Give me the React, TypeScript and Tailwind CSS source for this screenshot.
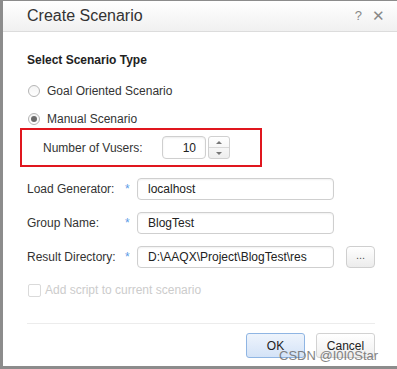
const Radio = ({ checked }: { checked?: boolean }) => (
  <span className="flex h-[12px] w-[12px] items-center justify-center rounded-full border border-[#b5b5b5] bg-gradient-to-b from-[#f4f4f4] to-white">
    {checked && <span className="h-[6px] w-[6px] rounded-full bg-[#6b6b6b]" />}
  </span>
);

const Field = ({ label, value }: { label: string; value: string }) => (
  <div className="flex h-[22px] items-center">
    <span className="w-[98px] text-[12px] leading-[16px] text-[#333]">{label}</span>
    <span className="w-[12px] text-[12px] leading-[16px] text-[#5b9be6]">*</span>
    <div className="flex h-[22px] w-[197px] items-center rounded-[4px] border border-[#cfcfcf] pl-[10px] text-[12px] leading-[16px] text-[#222] shadow-[inset_0_1px_2px_rgba(0,0,0,0.06)]">
      {value}
    </div>
  </div>
);

const App = () => {
  return (
    <div
      className="relative h-[369px] w-[397px] overflow-hidden bg-white leading-[16px]"
      style={{ fontFamily: '"Liberation Sans", Arial, sans-serif' }}
    >
      <div className="flex h-[369px] flex-col border-l-[3px] border-t border-b-[3px] border-[#8c8c8c]">
        <div className="flex h-[31px] shrink-0 items-center justify-between border-b border-[#dcdcdc] bg-gradient-to-b from-white to-[#f0f0f0] pl-[24px] pr-[12px]">
          <span className="text-[16px] leading-[20px] text-[#333]">Create Scenario</span>
          <div className="flex items-center gap-[10px] text-[13px] text-[#888]">
            <span>?</span>
            <span className="text-[15px]">✕</span>
          </div>
        </div>

        <div className="flex flex-col pl-[24px] pr-[19px]">
          <div className="mt-[20px] h-[16px] text-[12px] font-bold text-[#222]">Select Scenario Type</div>

          <div className="mt-[15px] flex h-[16px] items-center gap-[7px] pl-[1px] text-[12px] text-[#333]">
            <Radio />
            <span>Goal Oriented Scenario</span>
          </div>
          <div className="mt-[12px] flex h-[16px] items-center gap-[7px] pl-[1px] text-[12px] text-[#333]">
            <Radio checked />
            <span>Manual Scenario</span>
          </div>

          <div className="-ml-[7px] mt-[1px] flex h-[39px] w-[242px] items-center border-2 border-[#e0161e] pl-[21px]">
            <span className="w-[119px] text-[12px] text-[#333]">Number of Vusers:</span>
            <div className="flex h-[23px] w-[44px] items-center justify-end rounded-[4px] border border-[#cfcfcf] pr-[9px] text-[12px] text-[#222] shadow-[inset_0_1px_2px_rgba(0,0,0,0.08)]">
              10
            </div>
            <div className="ml-[2px] flex h-[23px] w-[22px] flex-col rounded-[3px] border border-[#d0d0d0] bg-gradient-to-b from-white to-[#eeeeee]">
              <div className="flex flex-1 items-center justify-center border-b border-[#d8d8d8]">
                <span className="h-0 w-0 border-x-[3px] border-b-[3px] border-x-transparent border-b-[#777]" />
              </div>
              <div className="flex flex-1 items-center justify-center">
                <span className="h-0 w-0 border-x-[3px] border-t-[3px] border-x-transparent border-t-[#777]" />
              </div>
            </div>
          </div>

          <div className="mt-[11px] flex flex-col gap-[12px]">
            <Field label="Load Generator:" value="localhost" />
            <Field label="Group Name:" value="BlogTest" />
            <div className="flex items-center">
              <Field label="Result Directory:" value="D:\AAQX\Project\BlogTest\res" />
              <div className="ml-[12px] flex h-[22px] w-[29px] items-start justify-center rounded-[4px] border border-[#cfcfcf] bg-gradient-to-b from-white to-[#ececec] text-[11px] leading-[16px] text-[#555]">
                ...
              </div>
            </div>
          </div>

          <div className="mt-[14px] flex h-[16px] items-center gap-[4px] pl-[1px] text-[12px] text-[#cccccc]">
            <span className="h-[13px] w-[13px] rounded-[2px] border border-[#dadada]" />
            <span>Add script to current scenario</span>
          </div>

          <div className="mt-[25px] h-px w-[348px] bg-[#ececec]" />

          <div className="mt-[9px] flex w-[348px] justify-end gap-[11px]">
            <div className="flex h-[25px] w-[59px] items-center justify-center rounded-[3px] border border-[#8fb5e3] bg-gradient-to-b from-[#eef4fc] to-[#d4e3f7] text-[12px] text-[#222]">
              OK
            </div>
            <div className="flex h-[25px] w-[59px] items-center justify-center rounded-[3px] border border-[#d2d2d2] bg-gradient-to-b from-white to-[#efefef] text-[12px] text-[#222]">
              Cancel
            </div>
          </div>
        </div>
      </div>
      <span className="absolute left-[279px] top-[348px] text-[13px] leading-[16px] text-[#666] opacity-80">CSDN @I0I0Star</span>
    </div>
  );
};

export default App;
